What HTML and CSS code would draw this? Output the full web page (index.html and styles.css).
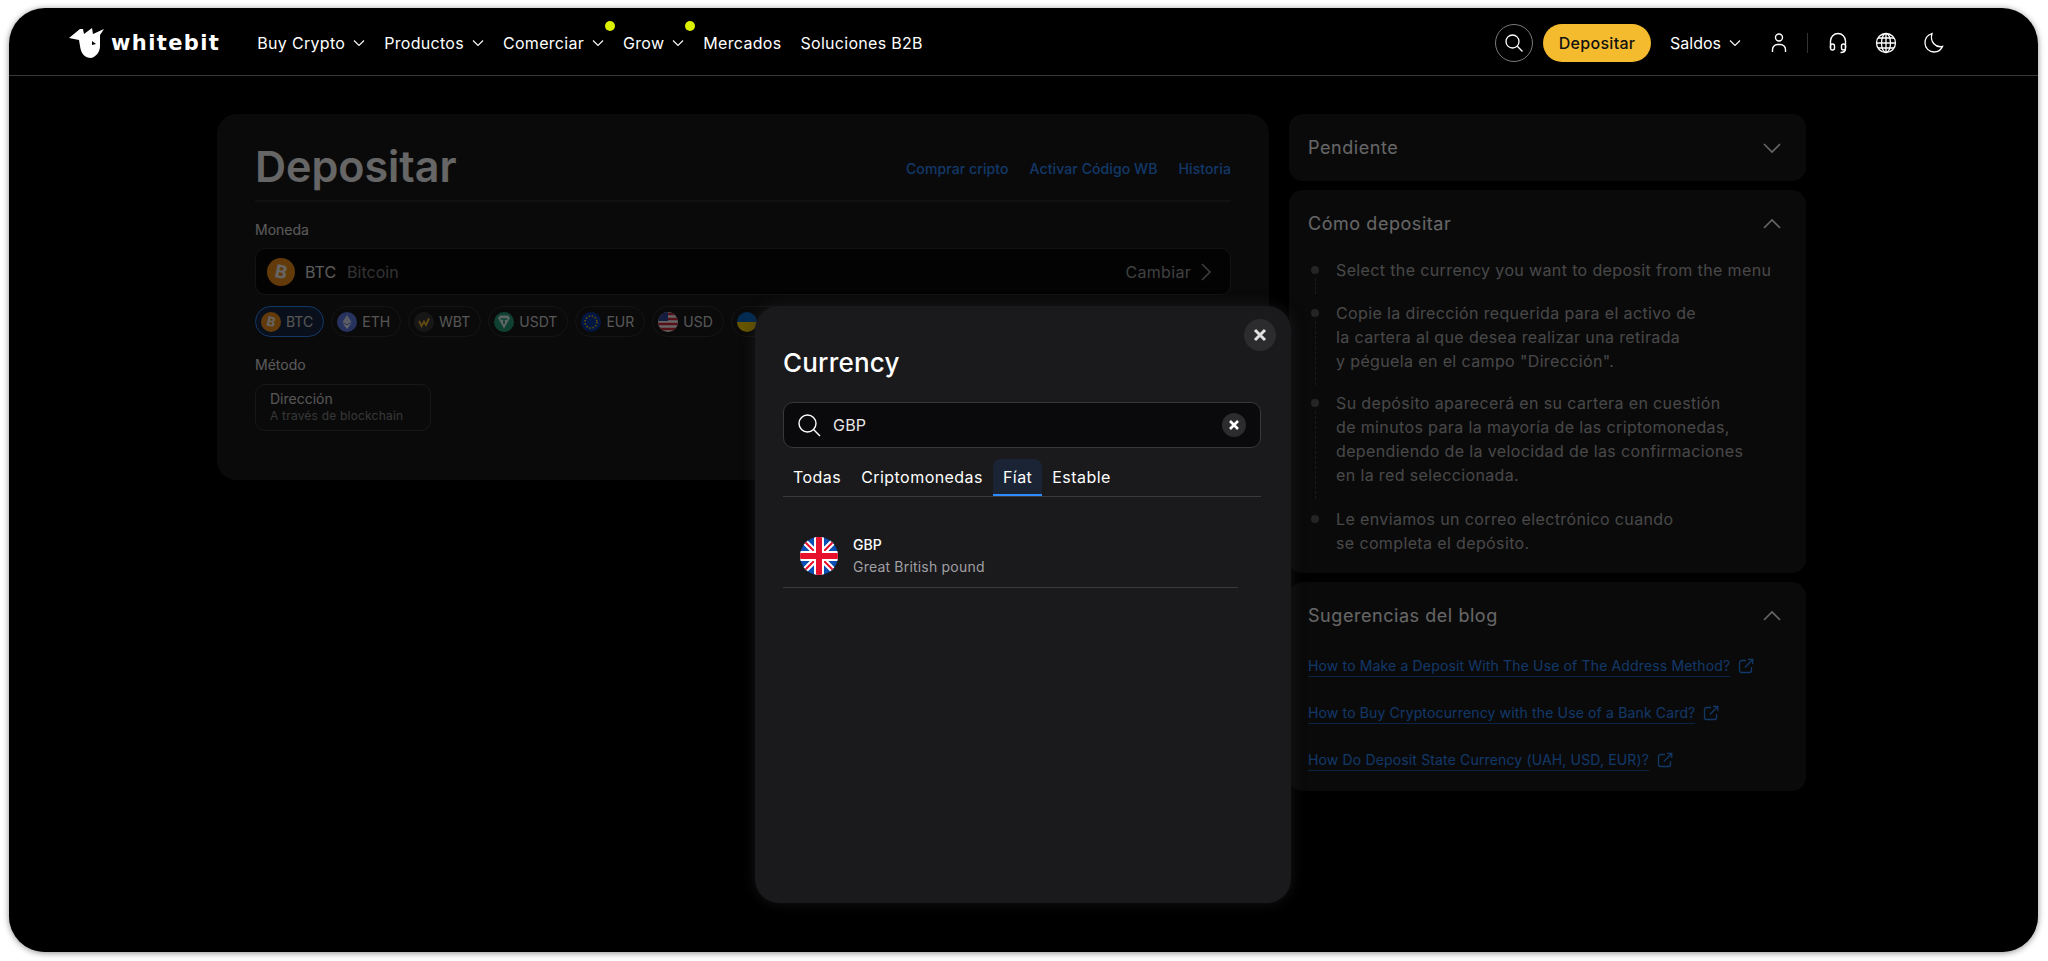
FILE: index.html
```html
<!DOCTYPE html>
<html lang="es">
<head>
    <meta charset="UTF-8">
    <title>Depositar</title>
    <link rel="stylesheet" href="styles.css">
</head>
<body>
    <svg class="icon-defs" width="0" height="0">
        <defs>
            <symbol id="chev-down" viewBox="0 0 12 12"><path d="M1 3.500 6 8.500 11 3.500" fill="none" stroke="currentColor" stroke-width="1.100"/></symbol>
            <symbol id="chev-big-down" viewBox="0 0 18 12"><path d="M1 2 9 10 17 2" fill="none" stroke="currentColor" stroke-width="1.600"/></symbol>
            <symbol id="chev-big-up" viewBox="0 0 18 12"><path d="M1 10 9 2 17 10" fill="none" stroke="currentColor" stroke-width="1.600"/></symbol>
            <symbol id="ext" viewBox="0 0 16 16"><path d="M8 2.500H3.500a2 2 0 0 0-2 2v8a2 2 0 0 0 2 2h8a2 2 0 0 0 2-2V9M7 9.500 14.500 1.500M10 1.300h4.700V6" fill="none" stroke="currentColor" stroke-width="1.300"/></symbol>
            <symbol id="btc" viewBox="0 0 28 28"><circle cx="14" cy="14" r="14" fill="#f7931a"/><text x="14" y="20" font-family="Inter" font-size="18" font-weight="700" fill="#fff" text-anchor="middle" transform="rotate(12 14 14)">B</text></symbol>
        </defs>
    </svg>

    <div class="window">
        <!-- Top bar -->
        <header class="topbar">
            <a class="logo" href="#">
                <svg width="36" height="30" viewBox="0 0 36 30"><path d="M0 10 11 1 14 1 15 6 23 0 24 6 35 1 31 7 31 18C31 24 27 29 22 30 16 30 12 26 11 18L10 12Z" fill="#fff"/><path d="M23 13 27 16 23 17Z" fill="#000"/></svg>
                <span class="logo-text">whitebit</span>
            </a>
            <nav class="nav">
                <a class="nav-item" href="#">Buy Crypto <svg class="chev" width="12" height="12"><use href="#chev-down"/></svg></a>
                <a class="nav-item" href="#">Productos <svg class="chev" width="12" height="12"><use href="#chev-down"/></svg></a>
                <a class="nav-item has-dot" href="#">Comerciar <svg class="chev" width="12" height="12"><use href="#chev-down"/></svg></a>
                <a class="nav-item has-dot" href="#">Grow <svg class="chev" width="12" height="12"><use href="#chev-down"/></svg></a>
                <a class="nav-item" href="#">Mercados</a>
                <a class="nav-item" href="#">Soluciones B2B</a>
            </nav>
            <div class="topbar-right">
                <button class="search-btn">
                    <svg width="20" height="20" viewBox="0 0 20 20"><circle cx="8.500" cy="8.500" r="6.500" fill="none" stroke="#fff" stroke-width="1.300"/><path d="M13.300 13.300 18.500 18.500" stroke="#fff" stroke-width="1.300"/></svg>
                </button>
                <button class="deposit-btn">Depositar</button>
                <a class="nav-item saldos" href="#">Saldos <svg class="chev" width="12" height="12"><use href="#chev-down"/></svg></a>
                <svg class="user-icon" width="16" height="24" viewBox="0 0 16 24"><circle cx="8" cy="6.500" r="3.500" fill="none" stroke="#fff" stroke-width="1.400"/><path d="M1.500 21v-2.500a5 5 0 0 1 5-5h3a5 5 0 0 1 5 5V21" fill="none" stroke="#fff" stroke-width="1.400"/></svg>
                <span class="bar-sep"></span>
                <svg class="head-icon" width="20" height="24" viewBox="0 0 20 24"><path d="M2.500 17V10a7.500 7.500 0 0 1 15 0v7" fill="none" stroke="#fff" stroke-width="1.400"/><rect x="2.500" y="13" width="4" height="6" rx="2" fill="none" stroke="#fff" stroke-width="1.400"/><rect x="13.500" y="13" width="4" height="6" rx="2" fill="none" stroke="#fff" stroke-width="1.400"/><path d="M17.500 18c0 3-2 3.500-5 3.500" fill="none" stroke="#fff" stroke-width="1.400"/></svg>
                <svg class="globe-icon" width="22" height="22" viewBox="0 0 22 22"><g fill="none" stroke="#fff" stroke-width="1.300"><circle cx="11" cy="11" r="9.500"/><ellipse cx="11" cy="11" rx="4.500" ry="9.500"/><path d="M1.500 11h19M3 6h16M3 16h16M11 1.500v19"/></g></svg>
                <svg class="moon-icon" width="22" height="22" viewBox="0 0 22 22"><path d="M9 1.500C4.500 3 2 6.500 2 11c0 5 4 9 9 9 3.800 0 7-2 8.500-5.500C13 16 6.500 10 9 1.500Z" fill="none" stroke="#fff" stroke-width="1.300"/></svg>
            </div>
        </header>

        <div class="stage">
            <main class="page">
                <section class="card deposit">
                    <div class="deposit-head">
                        <h1>Depositar</h1>
                        <div class="deposit-links">
                            <a href="#">Comprar cripto</a>
                            <a href="#">Activar Código WB</a>
                            <a href="#">Historia</a>
                        </div>
                    </div>
                    <div class="field-label">Moneda</div>
                    <div class="coin-select">
                        <svg width="28" height="28"><use href="#btc"/></svg>
                        <span class="coin-code">BTC</span>
                        <span class="coin-name">Bitcoin</span>
                        <span class="coin-change">Cambiar</span>
                        <svg width="12" height="20" viewBox="0 0 12 20"><path d="M2 2 10 10 2 18" fill="none" stroke="currentColor" stroke-width="1.500"/></svg>
                    </div>
                    <div class="chips">
                        <span class="chip active"><svg width="20" height="20" viewBox="0 0 28 28"><use href="#btc"/></svg>BTC</span>
                        <span class="chip"><svg width="20" height="20" viewBox="0 0 20 20"><circle cx="10" cy="10" r="10" fill="#627eea"/><path d="M10 3 14.500 10 10 12.500 5.500 10Z" fill="#dfe5fb"/><path d="M10 13.500 14.500 11 10 17 5.500 11Z" fill="#fff"/></svg>ETH</span>
                        <span class="chip"><svg width="20" height="20" viewBox="0 0 20 20"><circle cx="10" cy="10" r="10" fill="#3a3a3c"/><path d="M5 9 7.500 14 10 9.500 12 13 15 6.500" fill="none" stroke="#f4bb2f" stroke-width="1.800"/></svg>WBT</span>
                        <span class="chip"><svg width="20" height="20" viewBox="0 0 20 20"><circle cx="10" cy="10" r="10" fill="#26a17b"/><path d="M4 6 6 3.500H14L16 6 10 16.500Z" fill="#e8fff7"/><path d="M6.500 7H13.500M10 7V12" stroke="#26a17b" stroke-width="1.600"/></svg>USDT</span>
                        <span class="chip"><svg width="20" height="20" viewBox="0 0 20 20"><circle cx="10" cy="10" r="10" fill="#0a3aa8"/><circle cx="10" cy="10" r="6" fill="none" stroke="#ffd400" stroke-width="1.500" stroke-dasharray="1.500 1.640"/></svg>EUR</span>
                        <span class="chip"><svg width="20" height="20" viewBox="0 0 20 20"><defs><clipPath id="clip-usd"><circle cx="10" cy="10" r="10"/></clipPath></defs><g clip-path="url(#clip-usd)"><rect width="20" height="20" fill="#fff"/><path d="M0 2h20M0 7h20M0 12h20M0 17h20" stroke="#d8283c" stroke-width="2.500"/><rect width="10" height="9" fill="#2f4aa0"/></g></svg>USD</span>
                        <span class="chip"><svg width="20" height="20" viewBox="0 0 20 20"><defs><clipPath id="clip-uah"><circle cx="10" cy="10" r="10"/></clipPath></defs><g clip-path="url(#clip-uah)"><rect width="20" height="10" fill="#0a6fd0"/><rect y="10" width="20" height="10" fill="#ffd400"/></g></svg>UAH</span>
                    </div>
                    <div class="field-label method-label">Método</div>
                    <div class="method">
                        <div class="method-title">Dirección</div>
                        <div class="method-sub">A través de blockchain</div>
                    </div>
                </section>

                <aside class="side">
                    <section class="card side-card">
                        <div class="side-head">Pendiente <svg width="18" height="12"><use href="#chev-big-down"/></svg></div>
                    </section>
                    <section class="card side-card">
                        <div class="side-head">Cómo depositar <svg width="18" height="12"><use href="#chev-big-up"/></svg></div>
                        <ol class="steps">
                            <li class="step"><span class="marker"><i class="dot"></i><i class="dash"></i></span><p>Select the currency you want to deposit from the menu</p></li>
                            <li class="step"><span class="marker"><i class="dot"></i><i class="dash"></i></span><p>Copie la dirección requerida para el activo de<br>la cartera al que desea realizar una retirada<br>y péguela en el campo "Dirección".</p></li>
                            <li class="step"><span class="marker"><i class="dot"></i><i class="dash"></i></span><p>Su depósito aparecerá en su cartera en cuestión<br>de minutos para la mayoría de las criptomonedas,<br>dependiendo de la velocidad de las confirmaciones<br>en la red seleccionada.</p></li>
                            <li class="step"><span class="marker"><i class="dot"></i></span><p>Le enviamos un correo electrónico cuando<br>se completa el depósito.</p></li>
                        </ol>
                    </section>
                    <section class="card side-card">
                        <div class="side-head">Sugerencias del blog <svg width="18" height="12"><use href="#chev-big-up"/></svg></div>
                        <div class="blog-links">
                            <div class="blog-link"><a href="#">How to Make a Deposit With The Use of The Address Method?</a><svg width="16" height="16"><use href="#ext"/></svg></div>
                            <div class="blog-link"><a href="#">How to Buy Cryptocurrency with the Use of a Bank Card?</a><svg width="16" height="16"><use href="#ext"/></svg></div>
                            <div class="blog-link"><a href="#">How Do Deposit State Currency (UAH, USD, EUR)?</a><svg width="16" height="16"><use href="#ext"/></svg></div>
                        </div>
                    </section>
                </aside>
            </main>

            <div class="overlay"></div>

            <!-- Currency modal -->
            <div class="modal">
                <button class="modal-close">
                    <svg width="14" height="14" viewBox="0 0 14 14"><path d="M2 2 12 12M12 2 2 12" stroke="#e0e0e0" stroke-width="3"/></svg>
                </button>
                <h2>Currency</h2>
                <div class="search-box">
                    <svg width="24" height="24" viewBox="0 0 24 24"><circle cx="10.500" cy="10.500" r="8.500" fill="none" stroke="#fff" stroke-width="1.400"/><path d="M16.800 16.800 23 23" stroke="#fff" stroke-width="1.400"/></svg>
                    <span class="search-value">GBP</span>
                    <span class="search-clear"><svg width="12" height="12" viewBox="0 0 12 12"><path d="M2 2 10 10M10 2 2 10" stroke="#fff" stroke-width="2.600"/></svg></span>
                </div>
                <div class="tabs">
                    <span class="tab">Todas</span>
                    <span class="tab">Criptomonedas</span>
                    <span class="tab active">Fíat</span>
                    <span class="tab">Estable</span>
                </div>
                <div class="currency-row">
                    <svg width="38" height="38" viewBox="0 0 38 38">
                        <defs><clipPath id="clip-gbp"><circle cx="19" cy="19" r="19"/></clipPath></defs>
                        <g clip-path="url(#clip-gbp)">
                            <rect width="38" height="38" fill="#0a4fb4"/>
                            <path d="M0 0 38 38M38 0 0 38" stroke="#fff" stroke-width="6"/>
                            <path d="M0 0 38 38M38 0 0 38" stroke="#e8112d" stroke-width="2"/>
                            <path d="M19 0V38M0 19H38" stroke="#fff" stroke-width="10"/>
                            <path d="M19 0V38M0 19H38" stroke="#e8112d" stroke-width="6"/>
                        </g>
                    </svg>
                    <div>
                        <div class="currency-code">GBP</div>
                        <div class="currency-name">Great British pound</div>
                    </div>
                </div>
            </div>
        </div>
    </div>
</body>
</html>
```

FILE: styles.css
```css
/* Global styling */
* {
    box-sizing: border-box;
}

body {
    margin: 0;
    padding: 8px 10px 9px 9px;
    height: 961px;
    overflow: hidden;
    background: #ffffff;
    color: #ffffff;
    font-family: "Inter", "Liberation Sans", sans-serif;
    font-size: 16px;
}

a {
    color: inherit;
    text-decoration: none;
}

.icon-defs {
    position: absolute;
}

/* App window */
.window {
    height: 944px;
    background: #000000;
    border-radius: 36px;
    overflow: hidden;
    display: flex;
    flex-direction: column;
    box-shadow: 0 1px 6px rgba(0, 0, 0, 0.45);
}

/* Top bar */
.topbar {
    height: 68px;
    flex: none;
    display: flex;
    align-items: center;
    padding: 2px 93px 0 60px;
    border-bottom: 1px solid #38383a;
}

.logo {
    display: flex;
    align-items: center;
    gap: 6px;
    margin-right: 37px;
}

.logo-text {
    font-family: "DejaVu Sans", sans-serif;
    font-size: 21px;
    font-weight: 700;
    letter-spacing: 1.4px;
}

.nav {
    display: flex;
    align-items: center;
    gap: 19px;
    letter-spacing: 0.3px;
}

.nav-item {
    position: relative;
    display: flex;
    align-items: center;
    gap: 8px;
    white-space: nowrap;
}

.has-dot::after {
    content: "";
    position: absolute;
    top: -12px;
    right: -11px;
    width: 10px;
    height: 10px;
    border-radius: 50%;
    background: #dcf000;
}

.topbar-right {
    margin-left: auto;
    display: flex;
    align-items: center;
}

.search-btn {
    width: 38px;
    height: 38px;
    padding: 0;
    display: flex;
    align-items: center;
    justify-content: center;
    background: transparent;
    border: 1px solid #7a7a7a;
    border-radius: 50%;
}

.deposit-btn {
    width: 108px;
    height: 38px;
    margin-left: 10px;
    margin-right: 19px;
    padding: 0;
    background: #f4bb2f;
    color: #111111;
    border: none;
    border-radius: 19px;
    font-family: inherit;
    font-size: 16px;
    font-weight: 500;
    letter-spacing: 0.3px;
}

.user-icon {
    margin-left: 30px;
}

.bar-sep {
    width: 1px;
    height: 20px;
    margin: 0 20px;
    background: #333335;
}

.globe-icon {
    margin-left: 27px;
}

.moon-icon {
    margin-left: 26px;
}

/* Content behind the modal */
.stage {
    position: relative;
    flex: 1;
}

.page {
    display: flex;
    align-items: flex-start;
    gap: 20px;
    padding: 38px 0 0 208px;
}

.card {
    background: #1a1a1c;
    border-radius: 20px;
}

.deposit {
    width: 1052px;
    height: 366px;
    padding: 0 38px;
}

.deposit-head {
    height: 88px;
    display: flex;
    align-items: center;
    justify-content: space-between;
    padding-top: 18px;
    border-bottom: 2px solid #2c2c2e;
}

h1 {
    margin: 0;
    font-size: 43px;
    font-weight: 600;
    color: #ffffff;
}

.deposit-links {
    display: flex;
    gap: 21px;
    padding-top: 4px;
    font-size: 14px;
    font-weight: 500;
    letter-spacing: 0.1px;
    color: #2f8cff;
}

.field-label {
    margin-top: 19px;
    height: 18px;
    line-height: 18px;
    font-size: 14px;
    color: #e0e0e0;
}

.coin-select {
    margin-top: 9px;
    height: 47px;
    padding: 0 18px 0 11px;
    display: flex;
    align-items: center;
    background: #08080a;
    border: 1px solid #303032;
    border-radius: 10px;
    color: #a0a0a0;
}

.coin-code {
    margin-left: 10px;
    color: #e0e0e0;
}

.coin-name {
    margin-left: 11px;
    color: #808080;
}

.coin-change {
    margin-left: auto;
    margin-right: 9px;
    letter-spacing: 0.3px;
}

.chips {
    margin-top: 11px;
    display: flex;
    gap: 7px;
    white-space: nowrap;
}

.chip {
    height: 31px;
    padding: 0 10px 0 5px;
    display: flex;
    align-items: center;
    gap: 5px;
    border: 1px solid #333335;
    border-radius: 16px;
    font-size: 14px;
    color: #d8d8d8;
}

.chip.active {
    background: #1a2a44;
    border: 1.5px solid #2f8cff;
}

.method {
    margin-top: 10px;
    width: 176px;
    height: 47px;
    padding: 5px 14px;
    border: 1px solid #3a3a3c;
    border-radius: 10px;
}

.method-title {
    font-size: 14px;
    line-height: 18px;
    color: #d8d8d8;
}

.method-sub {
    font-size: 12px;
    line-height: 16px;
    color: #8a8a8a;
    letter-spacing: 0.2px;
}

/* Right column */
.side {
    width: 517px;
    display: flex;
    flex-direction: column;
    gap: 9px;
}

.side-card {
    padding: 0 25px 0 19px;
    border-radius: 14px;
}

.side-head {
    height: 67px;
    display: flex;
    align-items: center;
    justify-content: space-between;
    font-size: 18px;
    font-weight: 400;
    letter-spacing: 0.55px;
}

.steps {
    list-style: none;
    margin: 0;
    padding: 1px 0 18px 3px;
}

.step {
    display: flex;
    gap: 17px;
    padding-bottom: 19px;
    font-size: 16px;
    line-height: 24px;
    color: #b4b4b4;
}

.step:nth-child(2) {
    padding-bottom: 18px;
}

.step:nth-child(3) {
    padding-bottom: 20px;
}

.step:last-child {
    padding-bottom: 0;
}

.step p {
    margin: 0;
    letter-spacing: 0.37px;
}

.marker {
    width: 8px;
    margin-bottom: -12px;
    display: flex;
    flex-direction: column;
    align-items: center;
}

.dot {
    flex: none;
    width: 8px;
    height: 8px;
    margin-top: 8px;
    border-radius: 50%;
    background: #5a5a5c;
}

.dash {
    flex: 1;
    margin-top: 4px;
    border-left: 1px dashed #444446;
}

.blog-links {
    display: flex;
    flex-direction: column;
    gap: 23px;
    padding: 5px 0 19px;
}

.blog-link {
    display: flex;
    align-items: center;
    gap: 8px;
    height: 24px;
    font-size: 14px;
    color: #2f8cff;
}

.blog-link a {
    border-bottom: 1px solid #1c5aa8;
    letter-spacing: 0.15px;
    line-height: 20px;
}

/* Dim layer and modal */
.overlay {
    position: absolute;
    inset: 0;
    background: rgba(0, 0, 0, 0.6);
}

.modal {
    position: absolute;
    left: 746px;
    top: 230px;
    width: 536px;
    height: 597px;
    padding: 40px 30px 0 28px;
    background: #1a1a1c;
    border-radius: 24px;
    box-shadow: 0 0 14px rgba(40, 40, 42, 0.5);
}

.modal h2 {
    margin: 0;
    height: 34px;
    line-height: 34px;
    font-size: 26px;
    font-weight: 500;
    letter-spacing: 0.2px;
}

.modal-close {
    position: absolute;
    top: 13px;
    right: 15px;
    width: 32px;
    height: 32px;
    padding: 0;
    display: flex;
    align-items: center;
    justify-content: center;
    background: #2c2c2e;
    border: none;
    border-radius: 50%;
}

.search-box {
    margin-top: 22px;
    height: 46px;
    padding: 0 14px 0 13px;
    display: flex;
    align-items: center;
    background: #0a0a0c;
    border: 1px solid #38383c;
    border-radius: 10px;
}

.search-value {
    margin-left: 12px;
    letter-spacing: 0.2px;
    color: #e6e6e6;
}

.search-clear {
    margin-left: auto;
    width: 24px;
    height: 24px;
    display: flex;
    align-items: center;
    justify-content: center;
    background: #2c2c2e;
    border-radius: 50%;
}

.tabs {
    margin-top: 11px;
    display: flex;
    border-bottom: 1px solid #3a3a3e;
}

.tab {
    height: 37px;
    padding: 0 10px;
    display: flex;
    align-items: center;
    letter-spacing: 0.45px;
    border-bottom: 2px solid transparent;
}

.tab.active {
    background: #1a2434;
    border-radius: 8px 8px 0 0;
    border-bottom-color: #2f8cff;
}

.currency-row {
    margin-top: 35px;
    width: 455px;
    height: 56px;
    padding: 0 0 7px 17px;
    display: flex;
    align-items: center;
    gap: 15px;
    border-bottom: 1px solid #3a3a3e;
}

.currency-code {
    font-size: 14px;
    font-weight: 500;
    line-height: 22px;
}

.currency-name {
    font-size: 14px;
    line-height: 22px;
    letter-spacing: 0.2px;
    color: #a0a0a4;
}
```
